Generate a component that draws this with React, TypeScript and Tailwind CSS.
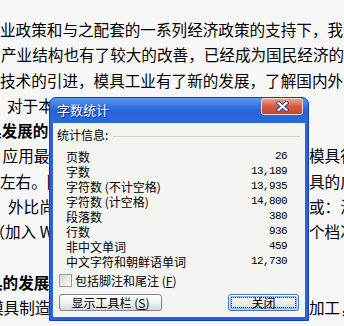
const lines: { l: string; r?: string; bold?: boolean; ml?: string; full?: boolean }[] = [
  { l: '业政策和与之配套的一系列经济政策的支持下，我国', ml: 'ml-0', full: true },
  { l: '产业结构也有了较大的改善，已经成为国民经济的基', ml: 'ml-[1px]', full: true },
  { l: '技术的引进，模具工业有了新的发展，了解国内外的', ml: 'ml-0', full: true },
  { l: '对于本', ml: 'ml-[7px]' },
  { l: '具发展的', bold: true, ml: '-ml-[14px]' },
  { l: '，应用最', r: '模具行', ml: '-ml-[13px]' },
  { l: '左右。国', r: '具的广', ml: 'ml-0' },
  { l: '外比尚', r: '或：汽', ml: 'ml-[8px]' },
  { l: '（加入 WT', r: '个档次', ml: '-ml-[10.6px]' },
  { l: '' },
  { l: '具的发展', bold: true, ml: '-ml-[13px]' },
  { l: '模具制造', r: '加工，', ml: '-ml-[12px]' },
]

function CloseGlyph() {
  return (
    <svg width="13" height="11" viewBox="0 0 13 11">
      <path d="M2.5 2 L10.5 9 M10.5 2 L2.5 9" stroke="#23408f" strokeWidth="4.2" strokeLinecap="square" />
      <path d="M2.5 2 L10.5 9 M10.5 2 L2.5 9" stroke="#ffffff" strokeWidth="2.2" strokeLinecap="square" />
    </svg>
  )
}

const stats: [string, string][] = [
  ['页数', '26'],
  ['字数', '13,189'],
  ['字符数 (不计空格)', '13,935'],
  ['字符数 (计空格)', '14,800'],
  ['段落数', '380'],
  ['行数', '936'],
  ['非中文单词', '459'],
  ['中文字符和朝鲜语单词', '12,730'],
]

export default function App() {
  return (
    <div className="relative w-[344px] h-[326px] overflow-hidden bg-[#f7f7f7] font-['Noto_Sans_CJK_SC',sans-serif]">
      {/* document text behind the dialog */}
      <div className="pt-[17px] text-[15.6px] leading-[25.3px] text-black">
        {lines.map((ln, i) => (
          <div key={i} className="flex h-[25.3px] whitespace-nowrap">
            <span className={`${ln.full ? 'flex-1' : 'w-[309px] shrink-0'} overflow-hidden ${ln.bold ? 'font-bold' : ''}`}>
              <span className={`inline-block ${ln.ml ?? ''}`}>{ln.l}</span>
            </span>
            {ln.r && <span>{ln.r}</span>}
          </div>
        ))}
      </div>

      {/* word count dialog */}
      <div className="absolute left-[49px] top-[97px] w-[260px] h-[224px] flex flex-col rounded-t-[7px] border border-[#0f3fbf] bg-[#2b62d6]">
        <div className="h-[25px] shrink-0 flex items-start justify-between rounded-t-[6px] bg-gradient-to-b from-[#5a97f2] via-[#2764d8] to-[#2d69dc]">
          <span className="pl-[7px] pt-[4px] text-[13px] leading-[16px] text-white [text-shadow:1px_1px_0_#0d2c8c]">字数统计</span>
          <button className="mr-[5px] w-[42px] h-[17px] flex items-center justify-center rounded-[3px] border border-[#f3d8d0] bg-gradient-to-b from-[#eba28b] via-[#d45a3e] to-[#c2482f]">
            <CloseGlyph />
          </button>
        </div>

        <div className="flex-1 mx-[3px] mb-[3px] bg-[#f4f4f1] text-[12px] text-black">
          <div className="mt-[5px] h-[14px] flex items-center pl-[4px] pr-[5px] leading-[14px]">
            <span>统计信息:</span>
            <div className="flex-1 ml-[5px] mt-[3px] border-t border-[#d6d4ca]"></div>
          </div>

          <div className="mt-[7px] pl-[13px] pr-[18px]">
            {stats.map(([k, v]) => (
              <div key={k} className="h-[15px] flex items-center justify-between leading-[15px]">
                <span>{k}</span>
                <span className="font-['Liberation_Mono',monospace] text-[11px] tracking-[-0.6px]">{v}</span>
              </div>
            ))}
          </div>

          <div className="mt-[5px] pl-[6px] flex items-center gap-[3px] h-[13px]">
            <span className="w-[13px] h-[13px] border border-[#9a9a9a] bg-gradient-to-br from-[#d8d8d2] to-[#fbfbfa]"></span>
            <span className="leading-[13px]">包括脚注和尾注 (<span className="underline">F</span>)</span>
          </div>

          <div className="mt-[7px] px-[6px] flex justify-between">
            <button className="w-[103px] h-[17px] flex items-center justify-center rounded-[3px] border border-[#7b8494] bg-gradient-to-b from-[#ffffff] via-[#f1f1ee] to-[#d9d9d3] text-[12px] leading-[15px]">
              显示工具栏 (<span className="underline">S</span>)
            </button>
            <button className="w-[71px] h-[17px] rounded-[3px] border border-[#3d6fbf] bg-gradient-to-b from-[#ffffff] via-[#eeeeea] to-[#d6d6d0] p-[1px]">
              <div className="w-full h-full rounded-[2px] border border-[#8fb2ea]">
                <div className="w-full h-full flex items-center justify-center border border-dotted border-[#222] text-[12px] leading-[11px]">关闭</div>
              </div>
            </button>
          </div>
        </div>
      </div>
    </div>
  )
}
